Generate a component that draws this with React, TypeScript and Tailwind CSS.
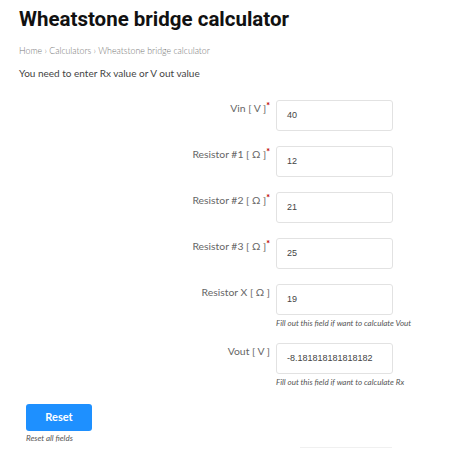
import React from "react";

const Row = ({ label, req, value, help }: { label: string; req?: boolean; value: string; help?: string }) => (
  <div className="flex">
    <div className="w-[257px] shrink-0 pr-[6px] pt-[1px] text-right text-[10.4px] leading-[14px] text-[#666] font-normal">
      {label}
      {req && <span className="text-[#b00] text-[9px] font-bold align-top relative top-[-2px]">*</span>}
    </div>
    <div className="flex flex-col">
      <div className="w-[117px] h-[31px] border border-[#e2e2e2] rounded-[3px] flex items-center pl-[10px] text-[9px] text-[#444] bg-white" style={{ fontFamily: '"Liberation Sans", Arial, sans-serif' }}>
        {value}
      </div>
      {help && <div className="mt-[3px] text-[8px] italic leading-[10px] text-[#555] whitespace-nowrap">{help}</div>}
    </div>
  </div>
);

export default function App() {
  return (
    <div className="w-[450px] h-[449px] bg-white overflow-hidden relative" style={{ fontFamily: 'Lato, "Open Sans", sans-serif' }}>
      <div className="pl-[19px] pt-[7px]">
        <h1 className="text-[20.5px] font-bold leading-[24px] text-[#111]" style={{ fontFamily: 'Roboto, Arial, sans-serif' }}>
          Wheatstone bridge calculator
        </h1>
        <div className="mt-[14px] text-[8.8px] leading-[11px] text-[#777] font-light">Home › Calculators › Wheatstone bridge calculator</div>
        <div className="mt-[10px] text-[10px] leading-[14px] text-[#444] font-normal">You need to enter Rx value or V out value</div>
      </div>
      <div className="mt-[20px] flex flex-col gap-[15px] pl-[19px]">
        <Row label="Vin [ V ]" req value="40" />
        <Row label="Resistor #1 [ Ω ]" req value="12" />
        <Row label="Resistor #2 [ Ω ]" req value="21" />
        <Row label="Resistor #3 [ Ω ]" req value="25" />
        <Row label="Resistor X [ Ω ]" value="19" help="Fill out this field if want to calculate Vout" />
        <Row label="Vout [ V ]" value="-8.181818181818182" help="Fill out this field if want to calculate Rx" />
      </div>
      <div className="pl-[26px] mt-[16px]">
        <button className="w-[66px] h-[27px] rounded-[3px] bg-[#1e90ff] text-white text-[11px] font-bold">Reset</button>
        <div className="mt-[2px] text-[8px] italic leading-[10px] text-[#555]">Reset all fields</div>
      </div>
      <div className="absolute left-[300px] top-[447px] w-[92px] h-px bg-[#f0f0f0]" />
    </div>
  );
}
